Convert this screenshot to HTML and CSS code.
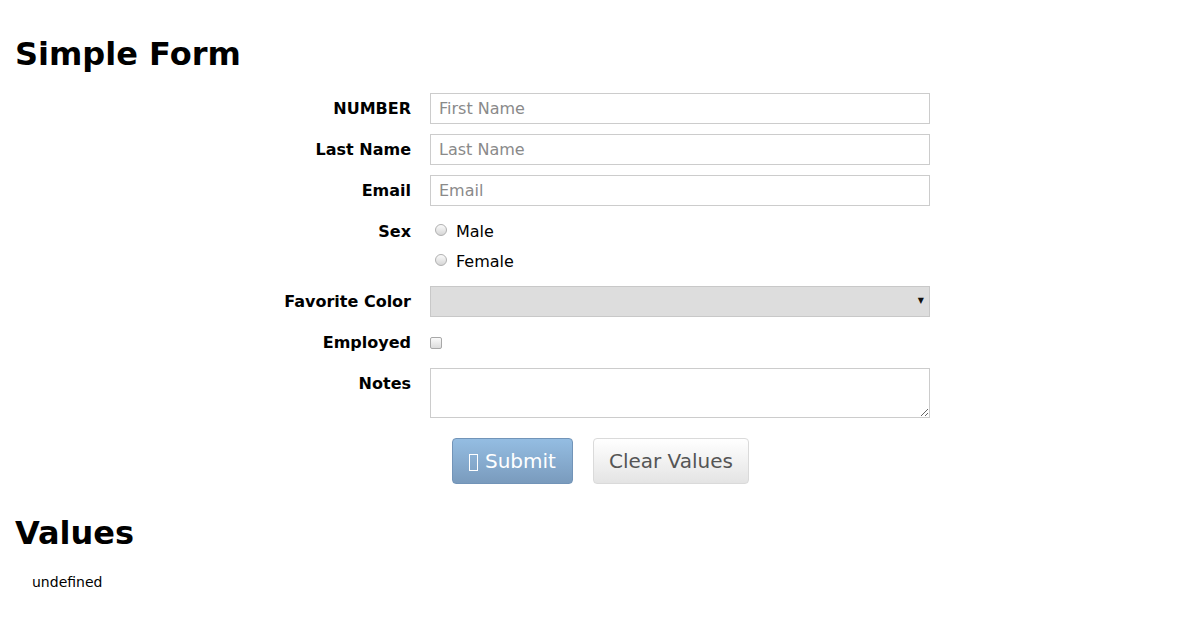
FILE: index.html
```html
<!DOCTYPE html>
<html>
<head>
<meta charset="utf-8">
<title>Simple Form</title>
<link rel="stylesheet" href="styles.css">
</head>
<body>
<div class="container">
  <h1 class="title">Simple Form</h1>
  <form class="form">
    <label class="label">NUMBER</label>
    <input class="field" type="text" placeholder="First Name">

    <label class="label">Last Name</label>
    <input class="field" type="text" placeholder="Last Name">

    <label class="label">Email</label>
    <input class="field" type="text" placeholder="Email">

    <label class="label">Sex</label>
    <div class="radios">
      <label class="radio-line"><input type="radio" name="sex" class="radio"><span>Male</span></label>
      <label class="radio-line"><input type="radio" name="sex" class="radio"><span>Female</span></label>
    </div>

    <label class="label">Favorite Color</label>
    <div class="select-wrap">
      <select class="select"><option></option></select>
    </div>

    <label class="label">Employed</label>
    <div class="check-line"><input type="checkbox" class="check"></div>

    <label class="label">Notes</label>
    <textarea class="notes"></textarea>

    <div class="actions">
      <button type="button" class="btn btn-primary"><span class="tofu"></span> Submit</button>
      <button type="button" class="btn btn-default">Clear Values</button>
    </div>
  </form>
  <h2 class="title values-title">Values</h2>
  <div class="values">undefined</div>
</div>
</body>
</html>
```

FILE: styles.css
```css
html, body {
  margin: 0;
  padding: 0;
  background: #fff;
  color: #000;
  font-family: "DejaVu Sans", sans-serif;
}

.container {
  padding: 0 15px;
}

.title {
  font-size: 32px;
  font-weight: bold;
  line-height: 37px;
  margin: 36px 0 0 0;
}

.form {
  display: grid;
  grid-template-columns: 396px 500px;
  column-gap: 19px;
  row-gap: 10px;
  margin-top: 20px;
}

.label {
  font-size: 16px;
  font-weight: bold;
  line-height: 31px;
  text-align: right;
}

.field {
  box-sizing: border-box;
  height: 31px;
  width: 500px;
  border: 1px solid #cccccc;
  border-radius: 0;
  padding: 0 8px;
  margin: 0;
  font-family: "DejaVu Sans", sans-serif;
  font-size: 16px;
  color: #333;
  background: #fff;
  outline: none;
}

.field::placeholder {
  color: #8a8a8a;
}

.radios {
  display: flex;
  flex-direction: column;
}

.radio-line {
  display: flex;
  align-items: center;
  height: 30px;
  font-size: 16px;
}

.radio {
  appearance: none;
  -webkit-appearance: none;
  width: 12px;
  height: 12px;
  margin: 0 9px 0 5px;
  border: 1px solid #b0b0b0;
  border-radius: 50%;
  background: linear-gradient(#fafafa, #d6d6d6);
  box-sizing: border-box;
  position: relative;
  top: -1px;
}

.select-wrap {
  position: relative;
  height: 31px;
}

.select-wrap::after {
  content: "▼";
  position: absolute;
  right: 6px;
  top: 10px;
  font-size: 8px;
  line-height: 10px;
  color: #111;
  pointer-events: none;
}

.select {
  appearance: none;
  -webkit-appearance: none;
  box-sizing: border-box;
  width: 500px;
  height: 31px;
  margin: 0;
  border: 1px solid #c8c8c8;
  border-radius: 0;
  background: #dddddd;
  font-family: "DejaVu Sans", sans-serif;
  font-size: 16px;
}

.check-line {
  display: flex;
  align-items: center;
  height: 31px;
}

.check {
  appearance: none;
  -webkit-appearance: none;
  width: 12px;
  height: 12px;
  margin: 0;
  border: 1px solid #a8a8a8;
  border-radius: 2px;
  background: linear-gradient(#fafafa, #dcdcdc);
  box-sizing: border-box;
}

.notes {
  box-sizing: border-box;
  width: 500px;
  height: 50px;
  margin: 0;
  border: 1px solid #cccccc;
  border-radius: 0;
  font-family: "DejaVu Sans", sans-serif;
  font-size: 16px;
  padding: 4px 8px;
  outline: none;
}

.actions {
  grid-column: 2;
  display: flex;
  gap: 20px;
  padding-left: 22px;
  margin-top: 10px;
}

.btn {
  box-sizing: border-box;
  height: 46px;
  padding: 0 15px;
  border-radius: 4px;
  font-family: "DejaVu Sans", sans-serif;
  font-size: 20px;
  line-height: 44px;
  cursor: pointer;
  display: inline-flex;
  align-items: center;
}

.btn-primary {
  color: #fff;
  border: 1px solid #7294b8;
  background: linear-gradient(#94bde2, #7a9bbd);
  padding: 0 16px;
}

.btn-default {
  color: #555;
  border: 1px solid #dadada;
  background: linear-gradient(#ffffff, #e4e4e4);
}

.tofu {
  display: inline-block;
  box-sizing: border-box;
  width: 9px;
  height: 17px;
  border: 1px solid #fff;
  margin-right: 7px;
  position: relative;
  top: 1px;
}

.values-title {
  margin-top: 31px;
}

.values {
  font-size: 14px;
  line-height: 16px;
  margin: 22px 0 0 17px;
}
```
